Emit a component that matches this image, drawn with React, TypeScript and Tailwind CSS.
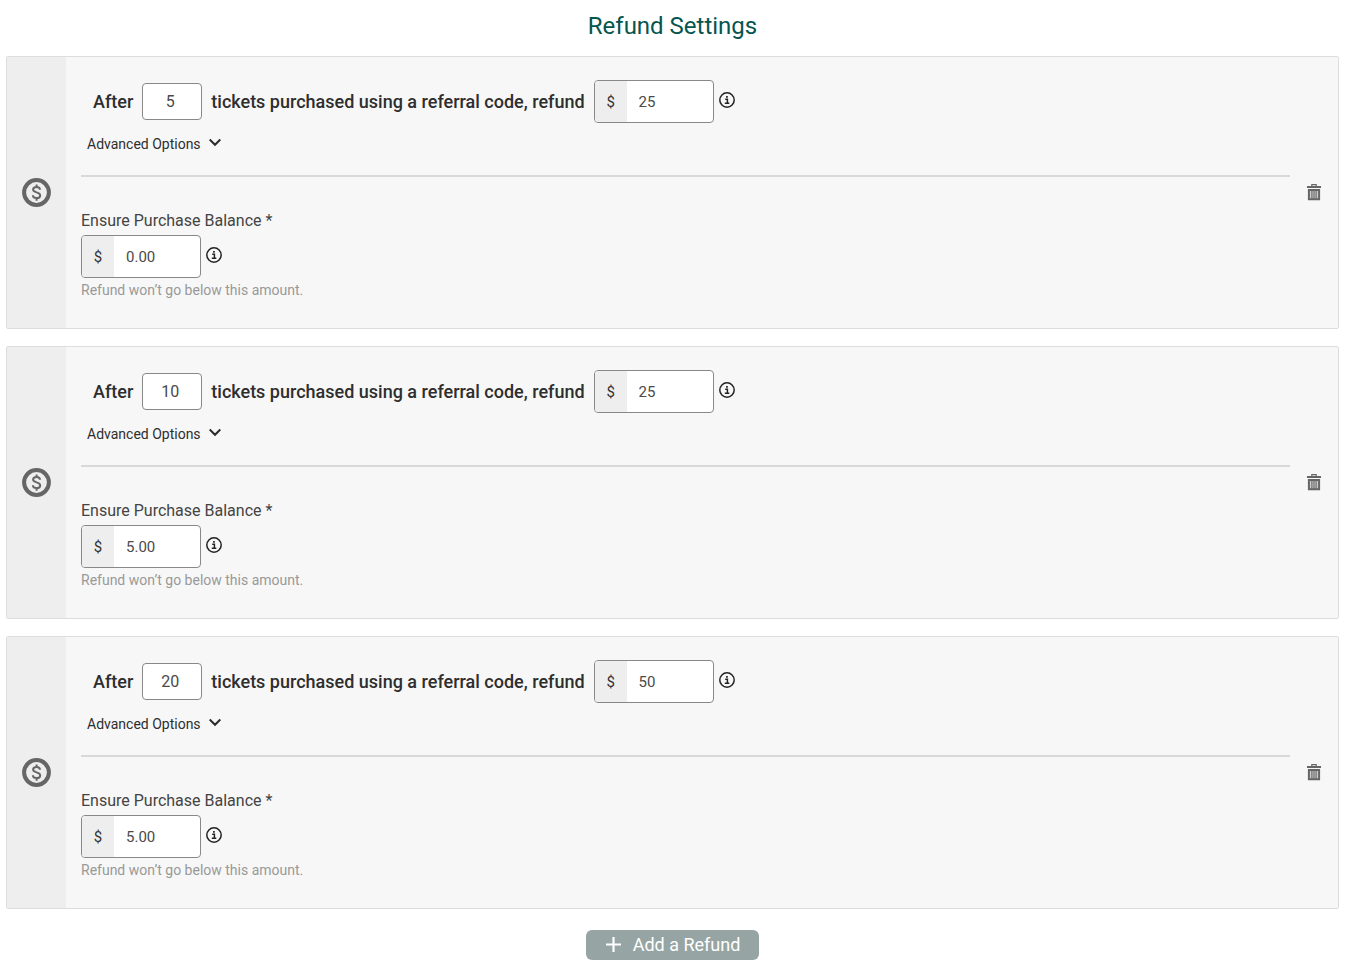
import { useState } from "react";

type Refund = {
  id: number;
  tickets: string;
  amount: string;
  balance: string;
};

const initialRefunds: Refund[] = [
  { id: 1, tickets: "5", amount: "25", balance: "0.00" },
  { id: 2, tickets: "10", amount: "25", balance: "5.00" },
  { id: 3, tickets: "20", amount: "50", balance: "5.00" },
];

function CoinIcon() {
  return (
    <svg className="h-[30px] w-[30px]" viewBox="0 0 30 30" fill="none" stroke="#666" aria-hidden="true">
      <circle cx="14.500" cy="14.500" r="12.400" strokeWidth="4" />
      <path
        d="M18 11.800c-.1-1.800-1.400-2.800-3.400-2.800-2.100 0-3.500 1.100-3.500 2.600 0 1.600 1.300 2.200 3.500 2.800s3.600 1.400 3.600 3-1.500 2.700-3.600 2.700c-2.200 0-3.600-1.100-3.700-2.900M14.600 6.500V9M14.600 20v2.700"
        strokeWidth="2"
      />
    </svg>
  );
}

function InfoIcon() {
  return (
    <svg className="h-4 w-4" viewBox="0 0 16 16" fill="none" stroke="#222" aria-hidden="true">
      <circle cx="8" cy="8" r="7.200" strokeWidth="1.500" />
      <path d="M6.200 7.200h2.200v4M5.800 11.300h4.500" strokeWidth="1.500" />
      <path d="M7.100 4.800h1.700" strokeWidth="1.800" />
    </svg>
  );
}

function ChevronIcon() {
  return (
    <svg className="h-3 w-3" viewBox="0 0 12 12" fill="none" stroke="currentColor" strokeWidth="2" aria-hidden="true">
      <path d="M0.700 1.500 6 6.800l5.300-5.300" />
    </svg>
  );
}

function TrashIcon() {
  return (
    <svg className="h-[17px] w-[14px]" viewBox="0 0 14 17" fill="none" stroke="#666" aria-hidden="true">
      <path d="M4.800 2.300V.7h4.400v1.600" strokeWidth="1.200" />
      <path d="M0 3h14" strokeWidth="1.800" />
      <path d="M1.900 6v9.200h10.200V6z" fill="#ccc" strokeWidth="2" />
      <path d="M4.900 6v9M7 6v9M9.100 6v9" strokeWidth="1.100" />
    </svg>
  );
}

function PlusIcon() {
  return (
    <svg className="h-4 w-4" viewBox="0 0 16 16" fill="none" stroke="currentColor" strokeWidth="2.200" aria-hidden="true">
      <path d="M8.500 0v15M1 7.500h15" />
    </svg>
  );
}

type MoneyInputProps = {
  id: string;
  value: string;
  onChange: (value: string) => void;
};

function MoneyInput({ id, value, onChange }: MoneyInputProps) {
  return (
    <div className="flex items-center gap-[5px]">
      <div className="flex h-[43px] w-[120px] overflow-hidden rounded border border-[#888] bg-white text-[15px] leading-[22px]">
        <span className="flex w-8 shrink-0 items-center justify-center bg-[#eee] text-[#333]">$</span>
        <input
          id={id}
          type="text"
          inputMode="decimal"
          value={value}
          onChange={(e) => onChange(e.target.value)}
          className="min-w-0 flex-1 px-3 text-[#4a4a4a] outline-none"
        />
      </div>
      <button type="button" aria-label="More information" className="pb-[3px]">
        <InfoIcon />
      </button>
    </div>
  );
}

type RefundCardProps = {
  refund: Refund;
  onChange: (refund: Refund) => void;
  onRemove: () => void;
};

function RefundCard({ refund, onChange, onRemove }: RefundCardProps) {
  const [open, setOpen] = useState(true);
  const balanceId = `balance-${refund.id}`;

  return (
    <li className="flex overflow-hidden rounded-xs border border-[#ddd] bg-[#f7f7f7]">
      <div className="flex w-[59px] shrink-0 items-center justify-center bg-[#eee]">
        <CoinIcon />
      </div>

      <div className="min-w-0 flex-1 pt-[23px] pb-7 pl-[15px]">
        <div className="flex flex-wrap items-center gap-[9px] pl-3 text-lg leading-6 font-medium text-[#2e2e2e]">
          <label htmlFor={`tickets-${refund.id}`}>After</label>
          <input
            id={`tickets-${refund.id}`}
            type="text"
            inputMode="numeric"
            value={refund.tickets}
            onChange={(e) => onChange({ ...refund, tickets: e.target.value })}
            className="h-[37px] w-[60px] rounded border border-[#888] bg-white pr-1 text-center text-base font-normal text-[#4a4a4a] outline-none"
          />
          <label htmlFor={`amount-${refund.id}`}>tickets purchased using a referral code, refund</label>
          <div className="font-normal">
            <MoneyInput
              id={`amount-${refund.id}`}
              value={refund.amount}
              onChange={(amount) => onChange({ ...refund, amount })}
            />
          </div>
        </div>

        <button
          type="button"
          aria-expanded={open}
          onClick={() => setOpen(!open)}
          className="mt-[11px] ml-[6px] flex h-5 items-center gap-2 text-sm text-[#2e2e2e]"
        >
          Advanced Options
          <ChevronIcon />
        </button>

        {open && (
          <div className="mt-[21px] border-t-2 border-[#d8d8d8] pt-[33px]">
            <label htmlFor={balanceId} className="block text-base leading-[22px] text-[#444]">
              Ensure Purchase Balance *
            </label>
            <div className="mt-[3px]">
              <MoneyInput
                id={balanceId}
                value={refund.balance}
                onChange={(balance) => onChange({ ...refund, balance })}
              />
            </div>
            <p className="mt-[2px] text-sm leading-5 text-[#999]">Refund won’t go below this amount.</p>
          </div>
        )}
      </div>

      <div className="flex w-12 shrink-0 items-center justify-center">
        <button type="button" aria-label="Delete refund" onClick={onRemove}>
          <TrashIcon />
        </button>
      </div>
    </li>
  );
}

export default function App() {
  const [refunds, setRefunds] = useState(initialRefunds);

  const update = (next: Refund) => setRefunds(refunds.map((r) => (r.id === next.id ? next : r)));
  const remove = (id: number) => setRefunds(refunds.filter((r) => r.id !== id));
  const add = () => setRefunds([...refunds, { id: Date.now(), tickets: "", amount: "", balance: "0.00" }]);

  return (
    <main className="min-h-screen bg-white pt-[10px] pr-[10px] pb-4 pl-[6px] font-['Roboto',sans-serif]">
      <h1 className="text-center text-2xl leading-8 text-[#07554f]">Refund Settings</h1>

      <ul className="mt-[14px] space-y-[17px]">
        {refunds.map((refund) => (
          <RefundCard key={refund.id} refund={refund} onChange={update} onRemove={() => remove(refund.id)} />
        ))}
      </ul>

      <div className="mt-[21px] flex justify-center">
        <button
          type="button"
          onClick={add}
          className="flex h-[30px] items-center gap-3 rounded-md bg-[#96a5a4] px-[19px] text-lg text-white"
        >
          <PlusIcon />
          Add a Refund
        </button>
      </div>
    </main>
  );
}
